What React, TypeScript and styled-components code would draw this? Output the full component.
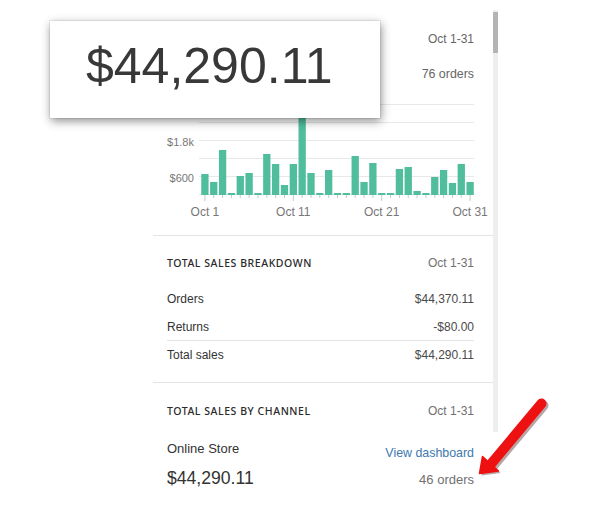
import React from "react";
import styled, { createGlobalStyle } from "styled-components";

const Global = createGlobalStyle`
  html, body { margin: 0; padding: 0; background: #fff; }
  body { font-family: "Liberation Sans", Arial, sans-serif; color: #333; }
`;

const Page = styled.div`
  position: relative;
  width: 603px;
  height: 507px;
  overflow: hidden;
  display: flex;
  align-items: flex-start;
  padding-left: 153px;
  box-sizing: border-box;
`;

const Panel = styled.div`
  width: 340px;
  display: flex;
  flex-direction: column;
`;

const Section = styled.section<{ $top: number; $bottom: number; $border?: boolean }>`
  padding: ${(p) => p.$top}px 19px ${(p) => p.$bottom}px 14px;
  border-top: ${(p) => (p.$border ? "1px solid #e4e4e4" : "none")};
  display: flex;
  flex-direction: column;
`;

const RightText = styled.div<{ $size?: number; $mt?: number }>`
  align-self: flex-end;
  font-size: ${(p) => p.$size ?? 12}px;
  line-height: 16px;
  color: #666;
  margin-top: ${(p) => p.$mt ?? 0}px;
`;

const HeadRow = styled.div`
  display: flex;
  justify-content: space-between;
  align-items: center;
  line-height: 16px;
`;

const Heading = styled.h3`
  margin: 0;
  font-family: "Noto Sans", "Open Sans", sans-serif;
  font-size: 10.5px;
  font-weight: 500;
  letter-spacing: 0.55px;
  text-transform: uppercase;
  color: #2a2a2a;
`;

const Muted = styled.span<{ $size?: number }>`
  font-size: ${(p) => p.$size ?? 12}px;
  color: #707070;
`;

const ChartWrap = styled.div`
  margin-top: 18px;
  height: 120px;
`;

const Rows = styled.div`
  margin-top: 14px;
  display: flex;
  flex-direction: column;
`;

const Row = styled.div<{ $divider?: boolean; $h: number }>`
  display: flex;
  justify-content: space-between;
  align-items: center;
  height: ${(p) => p.$h}px;
  font-size: 12px;
  border-bottom: ${(p) => (p.$divider ? "1px solid #e4e4e4" : "none")};
`;

const Label = styled.span`
  color: #333;
`;

const Value = styled.span`
  color: #4a4a4a;
`;

const ChannelRow = styled.div`
  margin-top: 22px;
  display: flex;
  justify-content: space-between;
`;

const Col = styled.div<{ $right?: boolean }>`
  display: flex;
  flex-direction: column;
  align-items: ${(p) => (p.$right ? "flex-end" : "flex-start")};
  padding-top: ${(p) => (p.$right ? 4 : 0)}px;
`;

const ChannelName = styled.span`
  font-size: 13px;
  line-height: 16px;
  color: #333;
`;

const Amount = styled.span`
  margin-top: 10px;
  font-size: 17.6px;
  line-height: 22px;
  color: #333;
`;

const Link = styled.a`
  font-size: 12.4px;
  line-height: 16px;
  color: #4079ad;
  text-decoration: none;
`;

const Orders = styled.span`
  margin-top: 11px;
  font-size: 13px;
  line-height: 16px;
  color: #707070;
`;

const ScrollTrack = styled.div`
  margin-top: 10px;
  width: 5px;
  height: 422px;
  background: #eeeeee;
  display: flex;
  flex-direction: column;
`;

const ScrollThumb = styled.div`
  margin-top: 2px;
  height: 41px;
  background: #b4b4b4;
`;

const Popup = styled.div`
  position: absolute;
  left: 50px;
  top: 21px;
  width: 330px;
  height: 97px;
  box-sizing: border-box;
  background: #fff;
  box-shadow: 0 0 0 1px rgba(0, 0, 0, 0.06), 1px 3px 9px rgba(0, 0, 0, 0.45);
  padding: 20px 0 0 36px;
`;

const PopupValue = styled.div`
  font-size: 50px;
  line-height: 50px;
  color: #383838;
`;

const ArrowSvg = styled.svg`
  position: absolute;
  left: 0;
  top: 0;
  pointer-events: none;
`;

const bars = [174, 182, 150, 193, 176, 173, 193, 154, 164, 185, 164, 110, 173, 193, 170, 193, 193, 156, 182, 163, 193, 193, 169, 167, 191, 193, 177, 170, 183, 164, 182];

const Chart: React.FC = () => {
  const band = 8.84;
  const x0 = 33.5;
  const base = 95;
  const grid = [4, 22, 40, 58, 76, 94];
  return (
    <svg width="307" height="120" viewBox="0 0 307 120" style={{ display: "block", overflow: "visible" }}>
      {grid.map((y) => (
        <line key={y} x1={32} x2={307} y1={y + 0.5} y2={y + 0.5} stroke="#e8e8e8" strokeWidth={1} />
      ))}
      <text x={27} y={46} textAnchor="end" fontSize={11} fill="#777" fontFamily="Liberation Sans, Arial, sans-serif">$1.8k</text>
      <text x={27} y={82} textAnchor="end" fontSize={11} fill="#777" fontFamily="Liberation Sans, Arial, sans-serif">$600</text>
      {bars.map((top, i) => {
        const y = top - 100;
        return <rect key={i} x={x0 + i * band + 0.77} y={y} width={7.3} height={base - y} fill="#50be9d" />;
      })}
      {bars.map((_, i) => {
        const cx = x0 + i * band + band / 2;
        const major = i % 10 === 0;
        return <line key={"t" + i} x1={cx} x2={cx} y1={base} y2={major ? base + 6 : base + 3} stroke="#c8c8c8" strokeWidth={1} />;
      })}
      {[0, 10, 20, 30].map((d) => (
        <text key={d} x={x0 + d * band + band / 2} y={116} textAnchor="middle" fontSize={12} fill="#777" fontFamily="Liberation Sans, Arial, sans-serif">
          {"Oct " + (d + 1)}
        </text>
      ))}
    </svg>
  );
};

export default function App() {
  return (
    <>
      <Global />
      <Page>
        <Panel>
          <Section $top={31} $bottom={15}>
            <RightText>Oct 1-31</RightText>
            <RightText $size={12.4} $mt={19}>76 orders</RightText>
            <ChartWrap>
              <Chart />
            </ChartWrap>
          </Section>
          <Section $top={19} $bottom={13} $border>
            <HeadRow>
              <Heading>Total sales breakdown</Heading>
              <Muted>Oct 1-31</Muted>
            </HeadRow>
            <Rows>
              <Row $h={28}>
                <Label>Orders</Label>
                <Value>$44,370.11</Value>
              </Row>
              <Row $h={27} $divider>
                <Label>Returns</Label>
                <Value>-$80.00</Value>
              </Row>
              <Row $h={28}>
                <Label>Total sales</Label>
                <Value>$44,290.11</Value>
              </Row>
            </Rows>
          </Section>
          <Section $top={20} $bottom={20} $border>
            <HeadRow>
              <Heading>Total sales by channel</Heading>
              <Muted>Oct 1-31</Muted>
            </HeadRow>
            <ChannelRow>
              <Col>
                <ChannelName>Online Store</ChannelName>
                <Amount>$44,290.11</Amount>
              </Col>
              <Col $right>
                <Link href="#">View dashboard</Link>
                <Orders>46 orders</Orders>
              </Col>
            </ChannelRow>
          </Section>
        </Panel>
        <ScrollTrack>
          <ScrollThumb />
        </ScrollTrack>
        <Popup>
          <PopupValue>$44,290.11</PopupValue>
        </Popup>
        <ArrowSvg width="603" height="507" viewBox="0 0 603 507">
          <g transform="translate(2 2)" opacity="0.35">
            <line x1="541.5" y1="403.5" x2="491" y2="464" stroke="#300" strokeWidth="10" strokeLinecap="round" />
            <polygon points="479.5,473.5 482.5,456.5 498.5,471" fill="#300" />
          </g>
          <line x1="541.5" y1="403.5" x2="491" y2="464" stroke="#ee1111" strokeWidth="10" strokeLinecap="round" />
          <polygon points="479.5,473.5 482.5,456.5 498.5,471" fill="#ee1111" stroke="#ee1111" strokeWidth="1.5" strokeLinejoin="round" />
        </ArrowSvg>
      </Page>
    </>
  );
}
